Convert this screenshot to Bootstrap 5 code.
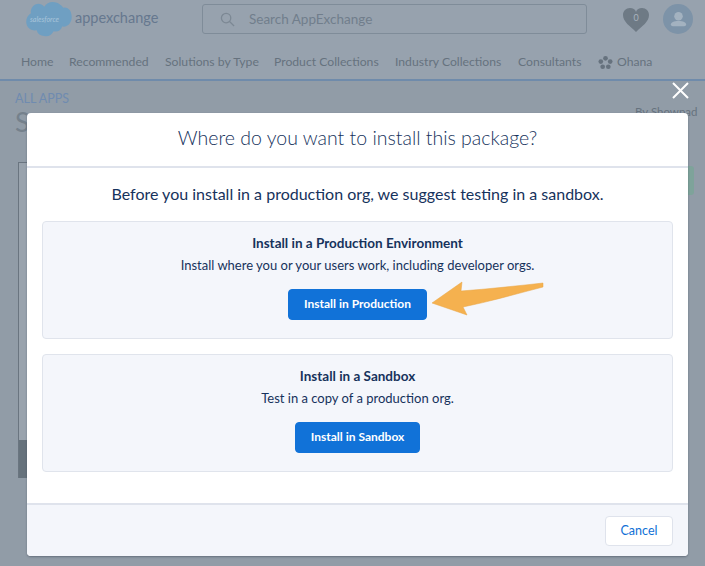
<!DOCTYPE html>
<html>
<head>
  <meta charset="UTF-8" />
  <title>Where do you want to install this package?</title>
  <link href="https://cdn.jsdelivr.net/npm/bootstrap@5.3.0/dist/css/bootstrap.min.css" rel="stylesheet" />
  <style>
    html, body { height: 100%; }
    body { background: #919ca7; font-family: Lato, "Liberation Sans", sans-serif; color: #16325c; overflow: hidden; position: relative; }
    .page-head { background: #97a2ae; }
    .top-bar { height: 38px; padding: 0 0 0 23px; }
    .cloud-logo { width: 50px; height: 36px; margin-right: 2px; flex: none; }
    .brand-name { font-size: 14.5px; color: #66788f; margin-top: -2px; width: 127px; }
    .search-box { width: 385px; height: 30px; border: 1px solid #7f8c99; border-radius: 3px; color: #717e8c; font-size: 13.5px; padding-left: 17px; gap: 14px; }
    .search-box svg { width: 15px; height: 15px; }
    .heart-wrap { position: relative; width: 28px; height: 26px; margin-left: 35px; }
    .heart-num { position: absolute; inset: 5px 0 0 0; text-align: center; font-size: 9px; color: #a9b3bd; }
    .avatar-dot { width: 30px; height: 30px; border-radius: 50%; background: #7d93a8; margin-left: 13px; }
    .page-nav { height: 43px; border-bottom: 2px solid #6f8bab; padding: 16px 0 0 21px; font-size: 12.2px; color: #66727e; white-space: nowrap; line-height: 16px; }
    .page-nav span { display: block; }
    .nav-home { width: 48px; }
    .nav-rec { width: 96px; }
    .nav-sol { width: 109px; }
    .nav-prod { width: 121px; }
    .nav-ind { width: 123px; }
    .nav-con { width: 80px; }
    .crumb { font-size: 12.5px; color: #6f8bb0; padding: 10px 0 0 15px; line-height: 16px; }
    .page-title { font-size: 27px; color: #75818c; padding-left: 15px; line-height: 30px; }
    .by-line { position: absolute; top: 103px; left: 635px; font-size: 11.5px; color: #66727e; }
    .behind-card { position: absolute; left: 18px; top: 162px; width: 20px; height: 316px; background: #99a3ad; border: 1px solid #6a7580; border-bottom: 0; }
    .behind-dark { position: absolute; left: 0; right: 0; bottom: 0; height: 38px; background: #66727c; }
    .behind-green { position: absolute; left: 680px; top: 166px; width: 14px; height: 29px; background: #7ea39a; border-radius: 3px; }
    .close-x { position: absolute; left: 672px; top: 82px; width: 17px; height: 17px; }
    .install-dialog { position: absolute; left: 27px; top: 113px; width: 661px; height: 443px; background: #fff; border: 0; border-radius: 4px; overflow: hidden; box-shadow: 0 1px 2px rgba(60,70,85,.5); }
    .install-dialog .modal-header { height: 55px; padding: 0 0 3px; border-bottom: 2px solid #dfe3ec; }
    .dialog-title { font-size: 19.5px; font-weight: 300; color: #16325c; width: 100%; text-align: center; margin: 0; line-height: 1; }
    .install-dialog .modal-body { padding: 0 15px; flex: none; }
    .suggest { font-size: 16px; text-align: center; line-height: 20px; padding: 16px 0 17px; margin: 0; }
    .env-box { background: #f4f6fb; border: 1px solid #e0e4ec; border-radius: 4px; text-align: center; font-size: 13px; color: #16325c; height: 118px; padding-top: 11px; }
    .env-box h2 { font-size: 13.5px; font-weight: 700; margin: 0; line-height: 20px; }
    .env-box p { margin: 0; line-height: 20px; padding-top: 2px; }
    .box-prod { margin-bottom: 15px; }
    .btn-install { background: #1172d8; border: 1px solid #1172d8; color: #fff; font-size: 12px; font-weight: 700; height: 31px; padding: 0 15px 2px; border-radius: 4px; margin-top: 14px; line-height: 26px; }
    .install-dialog .modal-footer { position: absolute; left: 0; right: 0; bottom: 0; height: 53px; padding: 0 15px; background: #f4f6fb; border-top: 2px solid #dfe3ec; display: flex; }
    .btn-cancel { background: #fff; border: 1px solid #dfe3ec; color: #0f70d6; font-size: 12.5px; width: 68px; height: 30px; padding: 2px 0 0; border-radius: 4px; margin: 0; }
    .arrow-note { position: absolute; left: 430px; top: 280px; width: 116px; height: 38px; }
  </style>
</head>
<body>
  <div class="page-head">
    <div class="top-bar d-flex align-items-center">
      <svg class="cloud-logo" viewBox="0 0 50 38">
        <path d="M21 6c2-3 5-5 9-5 5 0 9 3 11 6 6-1 9 4 9 10s-4 11-10 10c-1 4-5 6-9 5-2 4-6 6-10 5-4 0-7-2-8-6-6 1-11-3-11-9 0-4 2-7 5-9-1-5 3-10 8-10 2 0 4 1 6 3z" fill="#6f9fc2"/>
        <text x="6" y="22" font-size="7.500" font-style="italic" fill="#a9c5da" font-family="Lato, sans-serif">salesforce</text>
      </svg>
      <div class="brand-name">appexchange</div>
      <div class="search-box d-flex align-items-center">
        <svg viewBox="0 0 16 16" fill="none" stroke="#7c8894" stroke-width="1.4"><circle cx="6.5" cy="6.5" r="5"/><path d="M10.2 10.2 15 15"/></svg>
        <span>Search AppExchange</span>
      </div>
      <div class="heart-wrap">
        <svg viewBox="0 0 28 26" width="28" height="26"><path d="M14 25C8 19 1 15 1 8c0-4 3-7 7-7 3 0 5 1 6 4 1-3 3-4 6-4 4 0 7 3 7 7 0 7-7 11-13 17z" fill="#6e7a85"/></svg>
        <div class="heart-num">0</div>
      </div>
      <div class="avatar-dot d-flex align-items-center justify-content-center">
        <svg viewBox="0 0 20 20" width="19" height="19" fill="#a3b2c0"><circle cx="10" cy="6.5" r="4.5"/><path d="M2 15c0-2 3-3.500 8-3.500s8 1.500 8 3.500c0 1.500-1 2-2 2H4c-1 0-2-.5-2-2z"/></svg>
      </div>
    </div>
    <nav class="page-nav d-flex">
      <span class="nav-home">Home</span><span class="nav-rec">Recommended</span><span class="nav-sol">Solutions by Type</span><span class="nav-prod">Product Collections</span><span class="nav-ind">Industry Collections</span><span class="nav-con">Consultants</span>
      <span class="d-flex align-items-center align-self-start gap-1">
        <svg viewBox="0 0 16 16" width="15" height="15" fill="#66727e"><circle cx="8" cy="3.500" r="2.500"/><circle cx="3" cy="7" r="2.500"/><circle cx="13" cy="7" r="2.500"/><circle cx="5" cy="12.500" r="2.500"/><circle cx="11" cy="12.500" r="2.500"/></svg>Ohana
      </span>
    </nav>
  </div>
  <div class="crumb">ALL APPS</div>
  <div class="page-title">S</div>
  <div class="by-line">By Showpad</div>
  <div class="behind-card"><div class="behind-dark"></div></div>
  <div class="behind-green"></div>

  <svg class="close-x" viewBox="0 0 17 17" stroke="#fff" stroke-width="2"><path d="M1 1 16 16M16 1 1 16"/></svg>

  <div class="modal-content install-dialog">
    <div class="modal-header">
      <h1 class="dialog-title">Where do you want to install this package?</h1>
    </div>
    <div class="modal-body">
      <p class="suggest">Before you install in a production org, we suggest testing in a sandbox.</p>
      <div class="env-box box-prod">
        <h2>Install in a Production Environment</h2>
        <p>Install where you or your users work, including developer orgs.</p>
        <button type="button" class="btn btn-install">Install in Production</button>
      </div>
      <div class="env-box">
        <h2>Install in a Sandbox</h2>
        <p>Test in a copy of a production org.</p>
        <button type="button" class="btn btn-install">Install in Sandbox</button>
      </div>
    </div>
    <div class="modal-footer">
      <button type="button" class="btn btn-cancel">Cancel</button>
    </div>
  </div>

  <svg class="arrow-note" viewBox="0 0 116 38">
    <path d="M2 23 32 2 31 11C58 9 86 6 113 3L113 7C86 14 58 22 33 27L37 35z" fill="#f5b14f" stroke="#e8a443" stroke-width=".5"/>
  </svg>

  <script src="https://cdn.jsdelivr.net/npm/bootstrap@5.3.0/dist/js/bootstrap.bundle.min.js"></script>
</body>
</html>
